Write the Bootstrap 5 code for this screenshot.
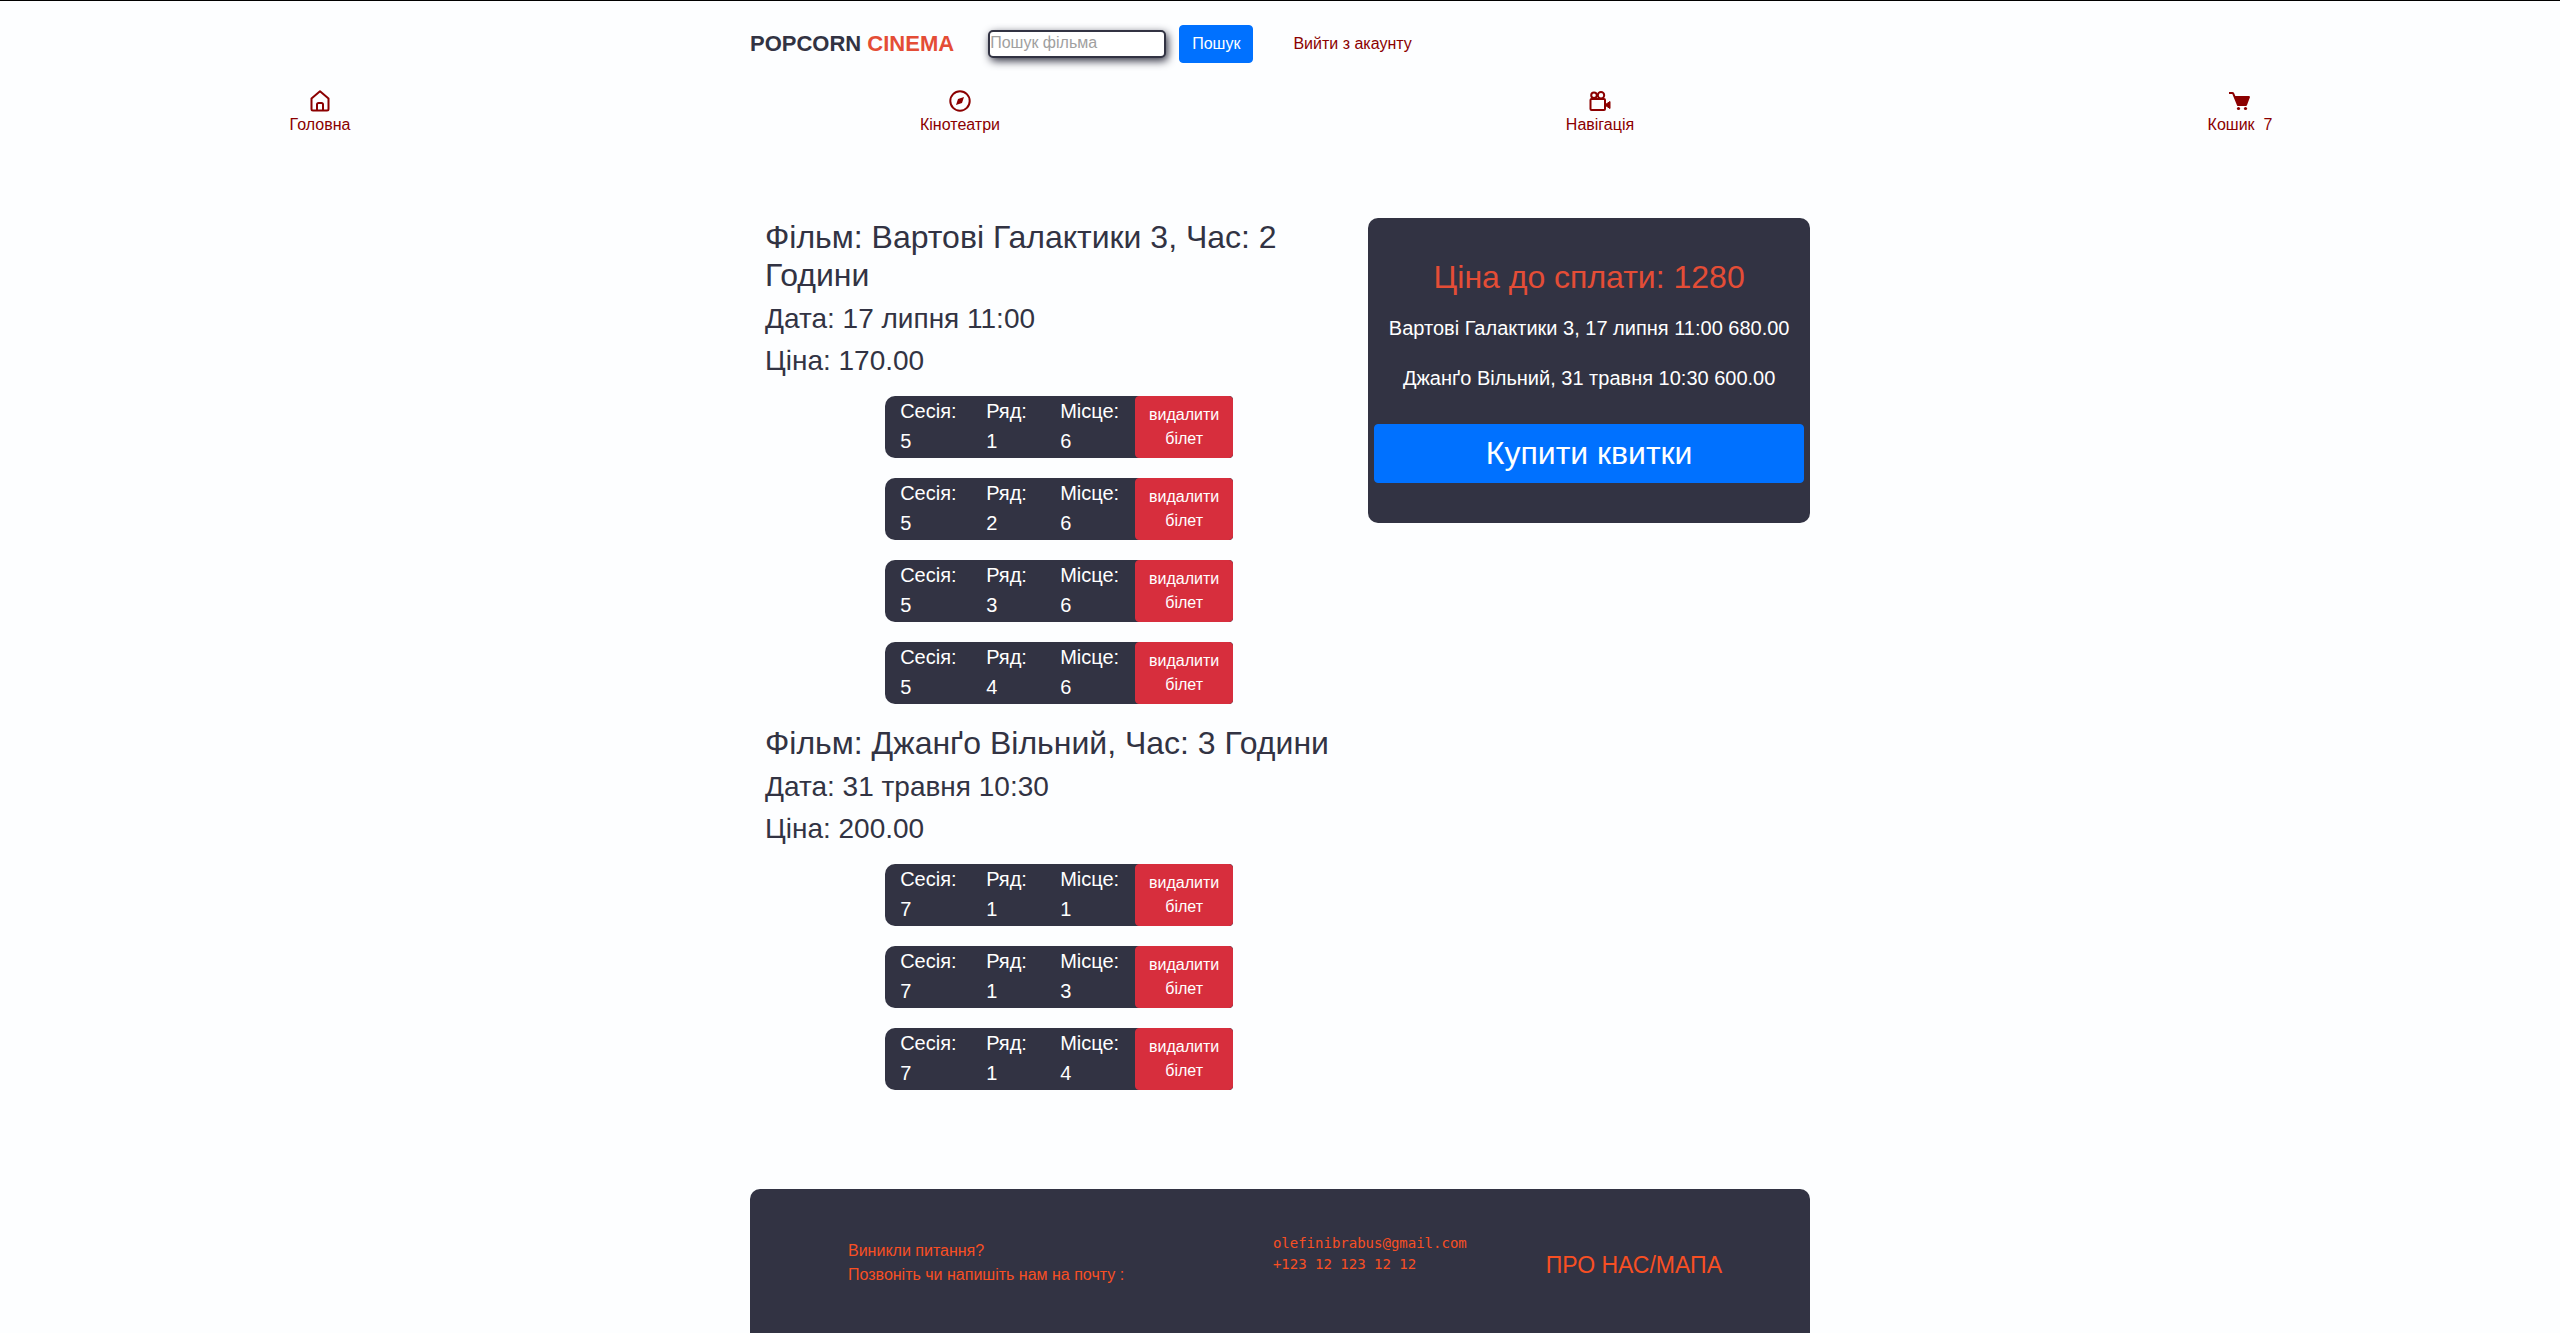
<!DOCTYPE html>
<html lang="uk">
<head>
<meta charset="utf-8">
<meta name="viewport" content="width=device-width, initial-scale=1">
<title>Popcorn Cinema</title>
<link rel="stylesheet" href="https://cdn.jsdelivr.net/npm/bootstrap@5.3.0/dist/css/bootstrap.min.css">
<style>
  :root { --ink: #323343; --coral: #e44d36; --flame: #f84f23; --wine: #8b0000; --sky: #0071ff; --danger: #d72e3d; }
  body { font-family: "Liberation Sans", Arial, sans-serif; font-size: 16px; line-height: 24px; color: var(--ink); background: #fdfeff; border-top: 1px solid #000; }
  a { color: var(--wine); text-decoration: none; }
  .page-wrap { width: 100%; max-width: 1060px; margin-inline: auto; }
  .top-bar { padding: 24px 0 26px; }
  .brand-name { font-size: 22px; font-weight: 700; color: var(--ink); margin-right: 34px; }
  .brand-name span { color: var(--coral); }
  .search-box { width: 178px; height: 28px; padding: 0 0 2px; font-size: 16px; color: var(--ink); background: #fff; border: 2px solid var(--ink); border-radius: 5px; box-shadow: 2px 3px 8px var(--ink); margin-right: 13px; }
  .search-box::placeholder { color: #a0a0a0; }
  .btn { --bs-btn-border-radius: 4px; --bs-btn-line-height: 24px; }
  .btn-sky { --bs-btn-color: #fff; --bs-btn-bg: var(--sky); --bs-btn-border-color: var(--sky); --bs-btn-hover-color: #fff; --bs-btn-hover-bg: #0062dd; }
  .btn-remove { --bs-btn-color: #fff; --bs-btn-bg: var(--danger); --bs-btn-border-color: var(--danger); --bs-btn-hover-color: #fff; --bs-btn-hover-bg: #bb2532; width: 98px; }
  .exit-link { margin-left: 40px; }
  .main-menu { padding-bottom: 81px; }
  .main-menu svg { display: block; margin: 0 auto; width: 24px; height: 24px; }
  .film-block { padding: 0 15px; }
  .film-block h2, .price-card h2 { font-size: 32px; line-height: 38px; font-weight: 400; margin-bottom: 8px; }
  .film-block h3 { font-size: 28px; line-height: 34px; font-weight: 400; margin-bottom: 8px; }
  .ticket-list { padding: 10px 0 0; margin: 0 auto; max-width: 348px; list-style: none; }
  .ticket-item { background: var(--ink); color: #fff; border-radius: 10px 4px 4px 10px; margin-bottom: 20px; font-size: 20px; line-height: 30px; }
  .ticket-item dl { display: grid; grid-template-columns: 86px 74px 1fr; padding-left: 15px; margin: 0; }
  .ticket-item dt { font-weight: 400; }
  .ticket-item dd { margin: 0; }
  .price-card { background: var(--ink); color: #fff; border-radius: 10px; padding: 40px 6px; font-size: 20px; line-height: 30px; text-align: center; }
  .price-card h2 { color: var(--coral); margin-bottom: 17px; }
  .price-card p { margin-bottom: 20px; }
  .btn-buy { font-size: 32px; --bs-btn-line-height: 45px; margin-top: 11px; }
  .site-footer { background: var(--ink); color: var(--flame); border-radius: 10px 10px 0 0; margin-top: 79px; padding: 44px 88px 50px 98px; column-gap: 79px; min-height: 144px; }
  .ask-us { padding-top: 6px; }
  .contacts { font: 14px/21px "DejaVu Sans Mono", monospace; }
  .site-footer a { color: var(--flame); }
  .about-link { font-size: 23px; line-height: 32px; }
</style>
</head>
<body class="d-flex flex-column min-vh-100">
<header>
  <div class="page-wrap top-bar d-flex align-items-center">
    <a class="brand-name" href="#">POPCORN <span>CINEMA</span></a>
    <form class="d-flex align-items-center">
      <input class="search-box" type="search" placeholder="Пошук фільма" aria-label="Пошук фільма">
      <button class="btn btn-sky" type="submit">Пошук</button>
    </form>
    <a class="exit-link" href="#">Вийти з акаунту</a>
  </div>
  <nav class="main-menu row g-0 text-center">
    <div class="col-3"><a class="d-inline-block" href="#">
      <svg viewBox="0 0 24 24" fill="none" stroke="currentColor" stroke-width="2" stroke-linejoin="round" aria-hidden="true"><path d="M3.500 9.500 12 2.200l8.500 7.300V20a1.500 1.500 0 0 1-1.500 1.500H5A1.500 1.500 0 0 1 3.500 20z"/><path d="M9 21v-5.500A1.500 1.500 0 0 1 10.500 14h3a1.500 1.500 0 0 1 1.500 1.500V21"/></svg>Головна</a></div>
    <div class="col-3"><a class="d-inline-block" href="#">
      <svg viewBox="0 0 24 24" fill="none" stroke="currentColor" stroke-width="2" aria-hidden="true"><circle cx="12" cy="12" r="9.700"/><path d="m8 16 2-6 6-2-2 6z" fill="currentColor" stroke="none"/></svg>Кінотеатри</a></div>
    <div class="col-3"><a class="d-inline-block" href="#">
      <svg viewBox="0 0 24 24" fill="none" stroke="currentColor" stroke-width="2" stroke-linejoin="round" aria-hidden="true"><circle cx="6" cy="6.200" r="2.800"/><circle cx="13" cy="6.200" r="3.200"/><rect x="2.500" y="10" width="14.500" height="11" rx="1"/><path d="M17.500 15.500 22 12.500v7l-4.500-3z" fill="currentColor" stroke-width="1"/></svg>Навігація</a></div>
    <div class="col-3"><a class="d-inline-block" href="#">
      <svg viewBox="0 0 24 24" fill="currentColor" aria-hidden="true"><path d="M21.822 7.431A1 1 0 0 0 21 7H7.333L6.179 4.230A1.994 1.994 0 0 0 4.333 3H1v2h3.333l4.744 11.385A1 1 0 0 0 10 17h8c.417 0 .790-.259.937-.648l3-8a1 1 0 0 0-.115-.921z"/><circle cx="10.500" cy="19.500" r="1.600"/><circle cx="17.500" cy="19.500" r="1.600"/></svg>Кошик&nbsp; 7</a></div>
  </nav>
</header>

<main class="page-wrap">
  <div class="row g-0 align-items-start">
    <div class="col-7">
      <section class="film-block">
        <h2>Фільм: Вартові Галактики 3, Час: 2 Години</h2>
        <h3>Дата: 17 липня 11:00</h3>
        <h3>Ціна: 170.00</h3>
        <ul class="ticket-list">
          <li class="ticket-item d-flex"><dl class="flex-grow-1"><div><dt>Сесія:</dt><dd>5</dd></div><div><dt>Ряд:</dt><dd>1</dd></div><div><dt>Місце:</dt><dd>6</dd></div></dl><button class="btn btn-remove" type="button">видалити білет</button></li>
          <li class="ticket-item d-flex"><dl class="flex-grow-1"><div><dt>Сесія:</dt><dd>5</dd></div><div><dt>Ряд:</dt><dd>2</dd></div><div><dt>Місце:</dt><dd>6</dd></div></dl><button class="btn btn-remove" type="button">видалити білет</button></li>
          <li class="ticket-item d-flex"><dl class="flex-grow-1"><div><dt>Сесія:</dt><dd>5</dd></div><div><dt>Ряд:</dt><dd>3</dd></div><div><dt>Місце:</dt><dd>6</dd></div></dl><button class="btn btn-remove" type="button">видалити білет</button></li>
          <li class="ticket-item d-flex"><dl class="flex-grow-1"><div><dt>Сесія:</dt><dd>5</dd></div><div><dt>Ряд:</dt><dd>4</dd></div><div><dt>Місце:</dt><dd>6</dd></div></dl><button class="btn btn-remove" type="button">видалити білет</button></li>
        </ul>
      </section>
      <section class="film-block">
        <h2>Фільм: Джанґо Вільний, Час: 3 Години</h2>
        <h3>Дата: 31 травня 10:30</h3>
        <h3>Ціна: 200.00</h3>
        <ul class="ticket-list">
          <li class="ticket-item d-flex"><dl class="flex-grow-1"><div><dt>Сесія:</dt><dd>7</dd></div><div><dt>Ряд:</dt><dd>1</dd></div><div><dt>Місце:</dt><dd>1</dd></div></dl><button class="btn btn-remove" type="button">видалити білет</button></li>
          <li class="ticket-item d-flex"><dl class="flex-grow-1"><div><dt>Сесія:</dt><dd>7</dd></div><div><dt>Ряд:</dt><dd>1</dd></div><div><dt>Місце:</dt><dd>3</dd></div></dl><button class="btn btn-remove" type="button">видалити білет</button></li>
          <li class="ticket-item d-flex"><dl class="flex-grow-1"><div><dt>Сесія:</dt><dd>7</dd></div><div><dt>Ряд:</dt><dd>1</dd></div><div><dt>Місце:</dt><dd>4</dd></div></dl><button class="btn btn-remove" type="button">видалити білет</button></li>
        </ul>
      </section>
    </div>
    <aside class="col-5 price-card">
      <h2>Ціна до сплати: 1280</h2>
      <p>Вартові Галактики 3, 17 липня 11:00 680.00</p>
      <p>Джанґо Вільний, 31 травня 10:30 600.00</p>
      <button class="btn btn-sky btn-buy w-100" type="button">Купити квитки</button>
    </aside>
  </div>
</main>

<footer class="page-wrap site-footer flex-grow-1 d-flex align-items-start">
  <div class="ask-us me-auto">Виникли питання?<br>Позвоніть чи напишіть нам на почту :</div>
  <address class="contacts mb-0"><a href="mailto:olefinibrabus@gmail.com">olefinibrabus@gmail.com</a><br>+123 12 123 12 12</address>
  <a class="about-link pt-3" href="#">ПРО НАС/МАПА</a>
</footer>
<script src="https://cdn.jsdelivr.net/npm/bootstrap@5.3.0/dist/js/bootstrap.bundle.min.js"></script>
</body>
</html>
